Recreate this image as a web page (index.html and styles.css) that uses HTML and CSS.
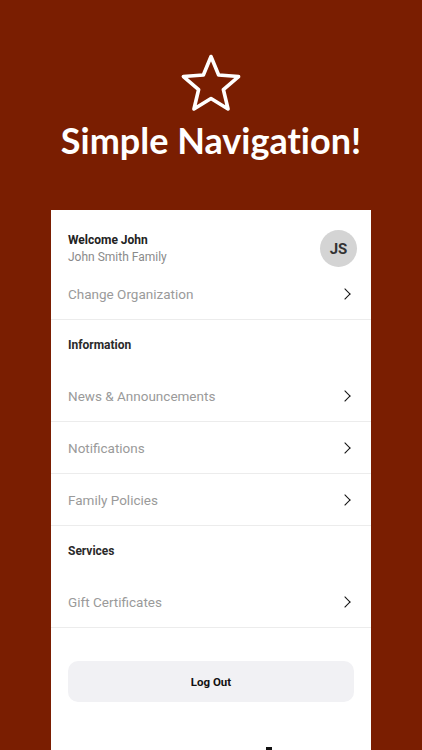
FILE: index.html
```html
<!DOCTYPE html>
<html lang="en">
<head>
    <meta charset="UTF-8">
    <meta name="viewport" content="width=device-width, initial-scale=1.0">
    <title>Simple Navigation</title>
    <link rel="stylesheet" href="styles.css">
</head>
<body>
    <header class="hero">
        <svg class="hero-star" width="64" height="64" viewBox="0 0 64 64" aria-hidden="true">
            <polygon points="32,3.5 39.64,21.98 59.58,23.54 44.36,36.52 49.05,55.96 32,45.5 14.95,55.96 19.64,36.52 4.42,23.54 24.36,21.98"
                     fill="none" stroke="#fff" stroke-width="3.6" stroke-linejoin="round"/>
        </svg>
        <h1>Simple Navigation!</h1>
    </header>

    <main class="card">
        <div class="profile">
            <div class="profile-text">
                <div class="profile-name">Welcome John</div>
                <div class="profile-family">John Smith Family</div>
            </div>
            <div class="avatar">JS</div>
        </div>
        <a class="row" href="#">Change Organization <span class="chevron"></span></a>

        <div class="section-title">Information</div>
        <a class="row" href="#">News &amp; Announcements <span class="chevron"></span></a>
        <a class="row" href="#">Notifications <span class="chevron"></span></a>
        <a class="row" href="#">Family Policies <span class="chevron"></span></a>

        <div class="section-title">Services</div>
        <a class="row" href="#">Gift Certificates <span class="chevron"></span></a>

        <div class="logout-wrap">
            <button class="logout">Log Out</button>
        </div>
        <div class="footer-mark"></div>
    </main>
</body>
</html>
```

FILE: styles.css
```css
html, body {
    margin: 0;
    padding: 0;
}
body {
    background-color: #7a1e01;
    font-family: Roboto, "Liberation Sans", sans-serif;
    height: 750px;
    overflow: hidden;
}
.hero {
    display: flex;
    flex-direction: column;
    align-items: center;
    padding-top: 53px;
    height: 210px;
    box-sizing: border-box;
}
.hero-star {
    display: block;
    flex-shrink: 0;
}
.hero h1 {
    margin: 1px 0 0;
    color: #fff;
    font-family: Lato, "Open Sans", sans-serif;
    font-weight: 700;
    font-size: 36px;
    line-height: 44px;
    font-variant-ligatures: none;
}
.card {
    width: 320px;
    margin: 0 auto 0 51px;
    background: #fff;
    min-height: 560px;
}
.profile {
    display: flex;
    align-items: center;
    justify-content: space-between;
    padding: 20px 14px 1px 17px;
}
.profile-name {
    font-size: 12px;
    font-weight: 700;
    color: #222;
    line-height: 17px;
}
.profile-family {
    font-size: 12px;
    color: #8a8a8a;
    line-height: 16px;
}
.avatar {
    width: 37px;
    height: 37px;
    border-radius: 50%;
    background: #d4d4d4;
    color: #333;
    font-weight: 700;
    font-size: 15px;
    display: flex;
    align-items: center;
    justify-content: center;
}
.row {
    display: flex;
    align-items: center;
    justify-content: space-between;
    height: 51px;
    padding: 0 22px 0 17px;
    border-bottom: 1px solid #ececec;
    color: #9a9a9a;
    font-size: 13.5px;
    text-decoration: none;
}
.chevron {
    width: 7px;
    height: 7px;
    border-top: 1.6px solid #111;
    border-right: 1.6px solid #111;
    transform: rotate(45deg);
}
.section-title {
    height: 50px;
    line-height: 50px;
    padding-left: 17px;
    font-size: 12px;
    font-weight: 700;
    color: #2a2a2a;
}
.logout-wrap {
    padding: 33px 17px 0;
}
.logout {
    display: block;
    width: 100%;
    height: 41px;
    border: none;
    border-radius: 10px;
    background: #f1f1f4;
    font-family: Roboto, "Liberation Sans", sans-serif;
    font-weight: 700;
    font-size: 11.5px;
    color: #111;
}
.footer-mark {
    width: 6px;
    height: 3px;
    background: #111;
    margin: 45px 0 0 215px;
}
```
